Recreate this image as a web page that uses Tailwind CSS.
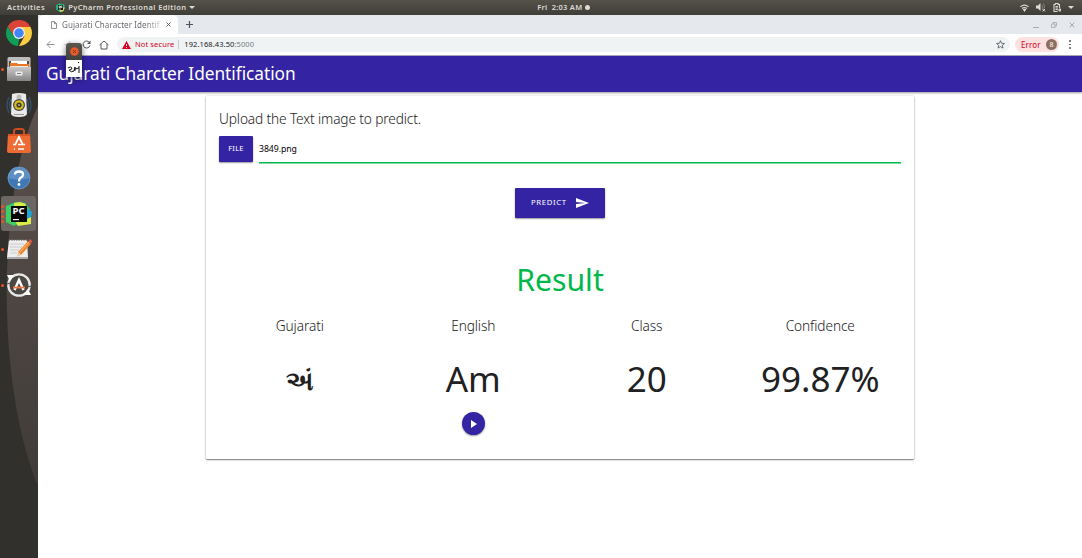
<!DOCTYPE html>
<html lang="en">
<head>
<meta charset="utf-8">
<title>Gujarati Character Identification</title>
<script src="https://cdn.jsdelivr.net/npm/@tailwindcss/browser@4"></script>
</head>
<body class="relative flex h-[558px] w-[1082px] flex-col overflow-hidden bg-white font-['Noto_Sans',sans-serif] text-[#212121]">
<header class="grid h-[15px] shrink-0 grid-cols-[1fr_auto_1fr] items-center bg-linear-to-b from-[#55524a] to-[#3e3d38] text-[7.5px] leading-none font-semibold text-[#dfdbd2]">
  <div class="flex items-center pl-[7px]">
    <span class="tracking-[0.47px]">Activities</span>
    <svg class="ml-[11px] size-[9px]" viewBox="0 0 24 24"><path fill="#21d789" d="M1 6 8 1l14 3 1 8-4 10-10 1-8-6z"/><path fill="#fcf84a" d="m14 10 9 3-4 9-9 1z"/><path fill="#111" d="M5 5h14v14H5z"/><path stroke="#fff" stroke-width="2" d="M8 8h4v4H8zM17 8h-3v4h3M8 16h5" fill="none"/></svg>
    <span class="ml-[3px] tracking-[0.38px]">PyCharm Professional Edition</span>
    <svg class="ml-[3px] h-[3px] w-[6px]" viewBox="0 0 6 3"><path fill="#dfdbd2" d="M0 0h6L3 3z"/></svg>
  </div>
  <div class="flex items-center gap-[3px] pl-[45px]"><span class="tracking-[0.25px] whitespace-pre">Fri  2:03 AM</span><i class="size-[4.5px] rounded-full bg-[#dfdbd2]"></i></div>
  <div class="flex items-center justify-end gap-[7px] pr-[8px] text-[#dfdbd2]">
    <svg class="h-[8px] w-[9px]" viewBox="0 0 18 16" fill="none" stroke="currentColor" stroke-width="2.200"><path d="M1 5.500Q9-1 17 5.500M4 9q5-4 10 0"/><path fill="currentColor" d="m7 11 2-1 2 1-2 3z"/></svg>
    <svg class="h-[9px] w-[10px]" viewBox="0 0 20 18"><path fill="currentColor" d="M0 5h4l5-5v16l-5-5H0z"/><path fill="none" stroke="#99958d" stroke-width="1.500" d="M12 4q3 4 0 8M15 1q4 7 1 10"/><path stroke="currentColor" stroke-width="2" d="m13 12 5 5m0-5-5 5"/></svg>
    <svg class="h-[9px] w-[8px]" viewBox="0 0 16 18" fill="none" stroke="currentColor" stroke-width="2.200"><path d="M5 3V1h5v2h3v7M9 17H2V3h3M5 7h5M5 10h5M5 13h4M9 14h7m-3-3 3 3-3 3"/></svg>
    <svg class="h-[3px] w-[6px]" viewBox="0 0 6 3"><path fill="currentColor" d="M0 0h6L3 3z"/></svg>
  </div>
</header>

<div class="flex min-h-0 flex-1">
  <aside class="relative w-[38px] shrink-0 overflow-hidden bg-[#32302c]">
    <svg class="absolute inset-0 h-[543px] w-[38px]" viewBox="0 0 38 543"><defs><linearGradient id="dk" x2="0" y2="1"><stop stop-color="#5b504b"/><stop offset="1" stop-color="#403c38"/></linearGradient></defs><path fill="url(#dk)" d="M38 91C-2 175-5 363 37 469h1z"/></svg>
    <nav class="relative flex flex-col pr-[2px] pl-px">
      <div class="flex h-[36px] items-center justify-center">
        <svg class="size-[26px]" viewBox="0 0 48 48"><path fill="#db4437" d="M3.200 12A24 24 0 0 1 45.300 13H24L14 29z"/><path fill="#ffcd40" d="M24 13h21.300A24 24 0 0 1 24 48l10-18z"/><path fill="#0f9d58" d="m3.200 12 11.300 18 10 5L22 48A24 24 0 0 1 3.200 12z"/><circle cx="24" cy="24" r="11" fill="#f1f1f1"/><circle cx="24" cy="24" r="8.800" fill="#4285f4"/></svg>
      </div>
      <div class="relative flex h-[36px] items-center justify-center">
        <i class="absolute left-0 size-[3px] rounded-full bg-[#e95420]"></i>
        <svg class="size-[26px]" viewBox="0 0 26 26"><defs><linearGradient id="fg" x2="0" y2="1"><stop stop-color="#c9c9c9"/><stop offset="1" stop-color="#858585"/></linearGradient></defs><rect x="1.500" y="1" width="23" height="24" rx="1.500" fill="#bdbdbd"/><path fill="#5a4941" d="M3 5h20v7H3z"/><path fill="#fff" d="M5 5h16v5H5z"/><path fill="#e87828" d="M4 7h7l1 1h11v3H4z"/><path fill="#f5e9da" d="M4 10h18v1H4z"/><path fill="url(#fg)" d="M1 11h24v13q0 1-1 1H2q-1 0-1-1z"/><rect x="9.500" y="15.500" width="7" height="4" rx="1" fill="#eee"/><path fill="#777" d="M11 17h4v1h-4z"/></svg>
      </div>
      <div class="flex h-[36px] items-center justify-center">
        <svg class="size-[26px]" viewBox="0 0 26 26"><path fill="none" stroke="#38506b" stroke-width="1.300" d="M3 5q-4 8 0 16M23 5q4 8 0 16M5 7q-3 6 0 12M21 7q3 6 0 12"/><path fill="#e9e9e9" d="M6 2q7-2 14 0l1 20q-1 3-8 3t-8-3z"/><circle cx="13" cy="5" r="2.500" fill="#bbb"/><circle cx="13" cy="13" r="6" fill="#454542"/><circle cx="13" cy="13" r="4.800" fill="#d7bd22"/><circle cx="13" cy="13" r="2.600" fill="#3d3b28"/><circle cx="13" cy="13" r="1.100" fill="#aaa"/><path stroke="#999" d="M8 22.500h10"/></svg>
      </div>
      <div class="flex h-[36px] items-center justify-center">
        <svg class="size-[26px]" viewBox="0 0 26 26"><path fill="none" stroke="#cd4c20" stroke-width="2" d="M8 8V3q0-2 3-2h4q3 0 3 2v5"/><path fill="#ee6b33" d="M2 6h22l1 17q0 2-2 2H3q-2 0-2-2z"/><path fill="#d95322" d="M2 6h22v2H2z"/><path fill="none" stroke="#fff" stroke-width="1.800" d="m9 17 4-8 4 8"/><path stroke="#fff" stroke-width="1.700" d="M7 16.500h3m2 0h7M8 21h1m3 0h6"/></svg>
      </div>
      <div class="flex h-[37px] items-center justify-center">
        <svg class="size-[24px]" viewBox="0 0 24 24"><circle cx="12" cy="12" r="11.300" fill="#3f78b5"/><path fill="#5e90c5" d="M1 12a11 11 0 0 1 22 0q-10 3-22 0"/><circle cx="12" cy="12" r="10.900" fill="none" stroke="#7197bd" stroke-width=".8"/><path fill="none" stroke="#fff" stroke-width="2.300" d="M8 8.500q0-3 4-3t4 3q0 2-2 3t-2 4"/><circle cx="12" cy="18.500" r="1.400" fill="#fff"/></svg>
      </div>
      <div class="relative flex h-[35px] items-center justify-center rounded-[3px] bg-[#6c6763]">
        <div class="absolute left-0 flex flex-col gap-[2px]"><i class="size-[3px] rounded-full bg-[#e95420]"></i><i class="size-[3px] rounded-full bg-[#e95420]"></i><i class="size-[3px] rounded-full bg-[#e95420]"></i><i class="size-[3px] rounded-full bg-[#e95420]"></i></div>
        <div class="relative flex size-[26px] items-center justify-center">
          <svg class="absolute inset-0 size-[26px]" viewBox="0 0 26 26"><path fill="#21c77e" d="m0 5 10-4 9 1 5 6-7 16H8l-8-3z"/><path fill="#d9ed47" d="m8 2 6-1 6 2-2 5-10 2zM20 9l5 3v11l-13 2-3-5z"/><path fill="#18a7dc" d="m21 8 5 3-1 5-4 2z"/><path fill="#3fd15f" d="m0 5 8-2 2 20-2 2-8-4z"/><path fill="#070707" d="M5 5h16v16H5z"/><path fill="#fff" d="M7 18h6v1.200H7z"/></svg>
          <span class="relative -mt-[5px] text-[9.5px] leading-none font-bold text-white">PC</span>
        </div>
      </div>
      <div class="relative flex h-[36px] items-center justify-center">
        <i class="absolute left-0 size-[3px] rounded-full bg-[#e95420]"></i>
        <svg class="size-[26px]" viewBox="0 0 26 26"><path fill="#eee" d="M3 4h18l1 17H1z"/><path fill="#aaa" d="M1 21h21v2H1z"/><path stroke="#777" stroke-width="1.500" stroke-dasharray="1.200 1.200" d="M3 4h18"/><path stroke="#c9c9c9" d="M4 8h14M4 11h12M4 14h9M4 17h7"/><path fill="#ed8730" d="m12 16 10-11 3 3-10 11z"/><path fill="#e8c99c" d="m12 16-1 5 4-2z"/><path fill="#da5846" d="m22 5 2-2 2 2v1l-1.500 2z"/><path stroke="#ffc073" d="m14 16 9-10"/></svg>
      </div>
      <div class="relative flex h-[36px] items-center justify-center">
        <i class="absolute left-0 size-[3px] rounded-full bg-[#e95420]"></i>
        <svg class="size-[26px]" viewBox="0 0 26 26"><circle cx="13" cy="13" r="10.700" fill="#4b4844" stroke="#e8e8e8" stroke-width="2.300"/><path fill="#fff" d="m1 3 7 0-4 6zM25 23h-8l5-6z"/><path stroke="#4b4844" stroke-width="1.200" d="m1 12 3-1m21 3-3 1"/><path fill="none" stroke="#fff" stroke-width="2.500" d="m8.500 18 4.500-10 4.500 10"/><path stroke="#ef7940" stroke-width="1.800" d="M7 15.500h12"/></svg>
      </div>
    </nav>
  </aside>

  <main class="flex min-w-0 flex-1 flex-col">
    <div class="flex h-[19px] shrink-0 items-end bg-[#e5e8ed]">
      <div class="ml-px flex h-[19px] w-[139px] items-center rounded-t-[5px] bg-white pl-[12px]">
        <svg class="h-[8px] w-[6px] shrink-0" viewBox="0 0 14 18" fill="none" stroke="#5f6368" stroke-width="1.700"><path d="M1 1h7l5 5v11H1zM8 1v5h5"/></svg>
        <span class="ml-[5px] w-[99px] overflow-hidden bg-linear-to-r from-[#5f6368] from-85% to-[#5f6368]/20 bg-clip-text text-[8px] leading-[12px] tracking-[0.08px] whitespace-nowrap text-transparent">Gujarati Character Identif</span>
        <svg class="ml-[5px] size-[5px] shrink-0" viewBox="0 0 10 10" stroke="#5f6368" stroke-width="2"><path d="m1 1 8 8m0-8L1 9"/></svg>
      </div>
      <svg class="mb-[6px] ml-[8px] size-[7px]" viewBox="0 0 14 14" stroke="#505459" stroke-width="2.400"><path d="M7 0v14M0 7h14"/></svg>
      <div class="mb-[6px] ml-auto flex items-end gap-[12px] pr-[7px] text-[#a5a8ac]">
        <i class="h-[1.5px] w-[6px] bg-[#a5a8ac]"></i>
        <svg class="size-[6px]" viewBox="0 0 12 12" fill="none" stroke="currentColor" stroke-width="1.700"><path d="M1 4h7v7H1zM4 4V1h7v7H8"/></svg>
        <svg class="size-[6px]" viewBox="0 0 12 12" stroke="currentColor" stroke-width="2"><path d="m1 1 10 10m0-10L1 11"/></svg>
      </div>
    </div>
    <div class="flex h-[22px] shrink-0 items-center border-b border-[#aaa9bb] bg-white pl-[8px] text-[7.5px] leading-none">
      <svg class="size-[9px]" viewBox="0 0 18 18" fill="none" stroke="#909397" stroke-width="2"><path d="M17 9H2m7-7L2 9l7 7"/></svg>
      <svg class="ml-[9px] size-[9px]" viewBox="0 0 18 18" fill="none" stroke="#c3c5c8" stroke-width="2"><path d="M1 9h15M9 2l7 7-7 7"/></svg>
      <svg class="ml-[9px] size-[9px]" viewBox="0 0 18 18" fill="none" stroke="#505459" stroke-width="2"><path d="M15 5a7 7 0 1 0 1 6"/><path fill="#505459" stroke="none" d="M17 1v7h-7z"/></svg>
      <svg class="ml-[8px] size-[10px]" viewBox="0 0 20 20" fill="none" stroke="#505459" stroke-width="2"><path d="m1 10 9-8 9 8M4 8v10h12V8"/></svg>
      <div class="ml-[8px] flex h-[15px] w-[893px] items-center rounded-full bg-[#eff3f4] pr-[5px] pl-[5px]">
        <svg class="h-[8px] w-[9px]" viewBox="0 0 18 16"><path fill="#d50022" d="M9 0l9 16H0z"/><path stroke="#fff" stroke-width="1.800" d="M9 6v4m0 2v2"/></svg>
        <span class="ml-[4px] tracking-[0.12px] text-[#d50022]">Not secure</span>
        <i class="ml-[4px] h-[9px] w-px bg-[#c8cbce]"></i>
        <span class="ml-[5px] tracking-[0.09px] text-[#202124]">192.168.43.50<span class="text-[#777b80]">:5000</span></span>
        <svg class="ml-auto size-[9px]" viewBox="0 0 20 20" fill="none" stroke="#505459" stroke-width="1.800"><path d="m10 1.500 2.500 5.800 6.300.5-4.800 4.100 1.500 6.100-5.500-3.300L4.500 18 6 11.900 1.200 7.800l6.300-.5z"/></svg>
      </div>
      <div class="ml-[5px] flex h-[15px] w-[44px] items-center justify-between rounded-full bg-[#fce1e1] pr-[2px] pl-[6px] text-[#d50022]">
        <span class="text-[8px] tracking-[0.15px]">Error</span><span class="flex size-[11px] items-center justify-center rounded-full bg-[#8d6e63] text-[7px] text-white">8</span>
      </div>
      <div class="ml-[10px] flex flex-col gap-[1.5px]"><i class="size-[1.7px] rounded-full bg-[#505459]"></i><i class="size-[1.7px] rounded-full bg-[#505459]"></i><i class="size-[1.7px] rounded-full bg-[#505459]"></i></div>
    </div>
    <div class="relative flex h-[36px] shrink-0 items-center bg-[#3424a4] pl-[8px] shadow-[0_1px_2px_rgba(0,0,0,.4)]">
      <h1 class="text-[17.3px] leading-none tracking-[-0.04px] text-white">Gujarati Charcter Identification</h1>
    </div>
    <section class="mt-[4px] ml-[168px] flex h-[363px] w-[708px] flex-col rounded-[1px] bg-white px-[13px] shadow-[0_1px_1.5px_rgba(0,0,0,.5),0_0_2px_rgba(0,0,0,.2)]">
      <p class="mt-[14px] text-[13.7px] leading-[18px] font-light tracking-[-0.13px]">Upload the Text image to predict.</p>
      <div class="mt-[8px] flex h-[27px]">
        <button class="h-[26px] w-[34px] rounded-[1px] bg-[#3424a4] text-[7.7px] tracking-[0.2px] text-white shadow-[0_1px_1.5px_rgba(0,0,0,.4)]">FILE</button>
        <div class="ml-[6px] flex w-[642px] items-center border-b border-[#00b849] text-[8.7px] leading-none tracking-[-0.05px] text-black shadow-[0_0.5px_0_#00b849]">3849.png</div>
      </div>
      <button class="mt-[25px] flex h-[30px] w-[90px] items-center self-center rounded-[1px] bg-[#3424a4] pl-[16px] text-[7.8px] tracking-[0.6px] text-white shadow-[0_1px_1.5px_rgba(0,0,0,.4)]">PREDICT
        <svg class="ml-[9px] h-[10px] w-[13px]" viewBox="0 0 21 18" preserveAspectRatio="none"><path fill="#fff" d="M0 18 21 9 0 0v7l15 2-15 2z"/></svg>
      </button>
      <h2 class="mt-[41px] text-center text-[30.2px] leading-[42px] text-[#00b849]">Result</h2>
      <div class="-mx-[6px] mt-[15px] grid grid-cols-4 text-center">
        <div><p class="text-[13.7px] leading-[20px] font-light tracking-[-0.1px]">Gujarati</p><p lang="gu" class="mt-[20px] text-[26px] leading-[48px] font-bold">અં</p></div>
        <div><p class="text-[13.7px] leading-[20px] font-light tracking-[-0.1px]">English</p><p class="mt-[19px] text-[35px] leading-[48px]">Am</p>
          <button class="mx-auto mt-[9px] flex size-[23px] items-center justify-center rounded-full bg-[#3424a4] shadow-[0_1px_2px_rgba(0,0,0,.4)]"><svg class="ml-px h-[8px] w-[6px]" viewBox="0 0 6 8"><path fill="#fff" d="M0 0v8l6-4z"/></svg></button></div>
        <div><p class="text-[13.7px] leading-[20px] font-light tracking-[-0.1px]">Class</p><p class="mt-[19px] text-[35px] leading-[48px]">20</p></div>
        <div><p class="text-[13.7px] leading-[20px] font-light tracking-[-0.1px]">Confidence</p><p class="mt-[19px] text-[35px] leading-[48px]">99.87%</p></div>
      </div>
    </section>
  </main>
</div>

<div class="absolute top-[43px] left-[66px] h-[34px] w-[16px] rounded-t-[3px] bg-white shadow-[0_2px_6px_rgba(0,0,0,.55)]">
  <div class="flex h-[17px] items-center justify-center rounded-t-[3px] bg-linear-to-b from-[#5a5750] to-[#42413c]"><svg class="size-[9px]" viewBox="0 0 18 18"><circle cx="9" cy="9" r="8.500" fill="#ec5a29"/><path stroke="#713015" stroke-width="1.700" d="m6 6 6 6m0-6-6 6"/></svg></div>
  <svg class="h-[16px] w-[16px]" viewBox="0 0 16 16" fill="none" stroke="#111" stroke-width="1"><path d="M2 8q3-2 4 0 0 2-3 2 2 3 5 1l1-4v4m0-2 4-1m0-2v7M12 2l1 1"/></svg>
</div>
</body>
</html>
